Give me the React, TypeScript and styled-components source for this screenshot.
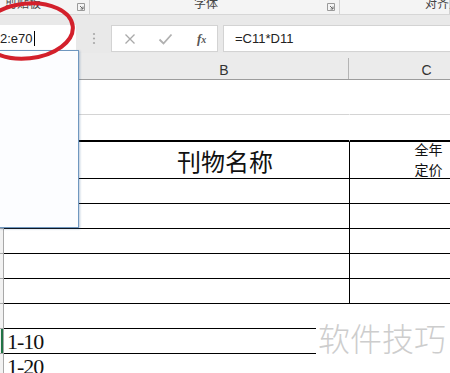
import React from "react";
import styled, { createGlobalStyle } from "styled-components";

const Global = createGlobalStyle`
  html, body {
    margin: 0;
    padding: 0;
    background: #ffffff;
  }
  body {
    font-family: "Liberation Sans", "Noto Sans CJK SC", sans-serif;
  }
`;

const rows = [
  { h: 35, line: "1px solid #d4d4d4", ruled: false },
  { h: 27, line: "2px solid #000", ruled: false },
  { h: 37, line: "1px solid #000", ruled: true, title: true },
  { h: 25, line: "1px solid #000", ruled: true },
  { h: 25, line: "1px solid #000", ruled: true },
  { h: 25, line: "1px solid #000", ruled: true },
  { h: 25, line: "1px solid #000", ruled: true },
  { h: 25, line: "1px solid #000", ruled: true },
  { h: 25, line: "1px solid #000", ruled: false },
  { h: 25, line: "1px solid #000", ruled: false, text: "1-10", active: true },
  { h: 25, line: "1px solid #000", ruled: false, text: "1-20" },
];

const Launcher = () => (
  <svg width="8" height="8" viewBox="0 0 8 8">
    <path d="M0.5 0.5h7v7h-7z" fill="none" stroke="#9a9a9a" />
    <path d="M3 3l3 3M6 3.5V6H3.5" fill="none" stroke="#6a6a6a" />
  </svg>
);

const App = () => {
  return (
    <Page>
      <Global />
      <Ribbon>
        <Group $w={90} $pad={5}>
          <GroupLabel>剪贴板</GroupLabel>
          <Launcher />
        </Group>
        <Group $w={250} $pad={104}>
          <GroupLabel>字体</GroupLabel>
          <Launcher />
        </Group>
        <Group $w={110} $pad={85}>
          <GroupLabel>对齐方式</GroupLabel>
        </Group>
      </Ribbon>

      <FormulaRow>
        <NameBox>
          2:e70
          <Caret />
        </NameBox>
        <Grip>
          <svg width="4" height="13" viewBox="0 0 4 13">
            <circle cx="2" cy="2" r="1.1" fill="#a8a8a8" />
            <circle cx="2" cy="6.5" r="1.1" fill="#a8a8a8" />
            <circle cx="2" cy="11" r="1.1" fill="#a8a8a8" />
          </svg>
        </Grip>
        <ButtonBox>
          <svg width="12" height="12" viewBox="0 0 12 12">
            <path d="M1.5 1.5l9 9M10.5 1.5l-9 9" stroke="#a9a9a9" strokeWidth="1.3" />
          </svg>
          <svg width="15" height="12" viewBox="0 0 15 12">
            <path d="M1.5 6.5l4 4L13.5 1.5" fill="none" stroke="#b0b0b0" strokeWidth="1.8" />
          </svg>
          <Fx>
            f<small>x</small>
          </Fx>
        </ButtonBox>
        <FormulaInput>=C11*D11</FormulaInput>
      </FormulaRow>

      <HeaderRow>
        <HeaderSpacer />
        <HeaderCell $w={249}>B</HeaderCell>
        <HeaderCell $w={156}>C</HeaderCell>
      </HeaderRow>

      <Sheet>
        {rows.map((r, i) => (
          <Row key={i} $h={r.h}>
            <RowHead $active={!!r.active} />
            <MainCell $line={r.line} $title={!!r.title} $left={!!r.text}>
              {r.title ? "刊物名称" : r.text}
            </MainCell>
            <SideCell $line={r.line} $ruled={r.ruled}>
              {r.title && (
                <PriceLabel>
                  <span>全年</span>
                  <span>定价</span>
                </PriceLabel>
              )}
            </SideCell>
          </Row>
        ))}
      </Sheet>

      <NameList />
      <Ring width="80" height="66" viewBox="0 0 80 66">
        <ellipse
          cx="27"
          cy="31"
          rx="46"
          ry="27.5"
          transform="rotate(-6 27 31)"
          fill="none"
          stroke="#d3202b"
          strokeWidth="4"
        />
      </Ring>
      <Watermark>软件技巧</Watermark>
    </Page>
  );
};

export default App;

const Page = styled.div`
  position: relative;
  width: 450px;
  height: 373px;
  overflow: hidden;
  background: #fff;
`;

const Ribbon = styled.div`
  display: flex;
  height: 14px;
  background: #f4f4f4;
  border-bottom: 1px solid #d6d6d6;
  overflow: hidden;
`;

const Group = styled.div<{ $w: number; $pad: number }>`
  display: flex;
  align-items: flex-start;
  flex-shrink: 0;
  width: ${(p) => p.$w}px;
  padding-left: ${(p) => p.$pad}px;
  padding-right: 4px;
  box-sizing: border-box;
  border-right: 1px solid #d2d2d2;
  height: 14px;

  svg {
    margin-left: auto;
    margin-top: 3px;
  }
`;

const GroupLabel = styled.span`
  font-family: "Noto Sans CJK SC", sans-serif;
  font-size: 12px;
  line-height: 12px;
  margin-top: -3px;
  color: #444;
  white-space: nowrap;
`;

const FormulaRow = styled.div`
  display: flex;
  align-items: stretch;
  height: 38px;
  padding: 10px 0 1px;
  box-sizing: border-box;
  background: #e9e9e9;
`;

const NameBox = styled.div`
  position: relative;
  width: 76px;
  background: #fff;
  font-size: 13px;
  color: #222;
  display: flex;
  align-items: center;
  box-sizing: border-box;
`;

const Caret = styled.span`
  display: inline-block;
  width: 1px;
  height: 15px;
  background: #000;
  margin-left: 1px;
`;

const Grip = styled.div`
  width: 35px;
  display: flex;
  align-items: center;
  justify-content: center;
`;

const ButtonBox = styled.div`
  width: 107px;
  background: #fff;
  border: 1px solid #d3d3d3;
  box-sizing: border-box;
  display: flex;
  align-items: center;
  padding-left: 12px;
  gap: 22px;
`;

const Fx = styled.span`
  font-family: "Liberation Serif", serif;
  font-style: italic;
  font-weight: bold;
  font-size: 13px;
  color: #555;
  margin-left: 2px;

  small {
    font-size: 10px;
  }
`;

const FormulaInput = styled.div`
  flex: 1;
  margin-left: 5px;
  background: #fff;
  border: 1px solid #d3d3d3;
  border-right: none;
  display: flex;
  align-items: center;
  padding-left: 11px;
  font-size: 13px;
  color: #222;
`;

const HeaderRow = styled.div`
  display: flex;
  height: 27px;
  background: #ebebeb;
  border-bottom: 1px solid #9c9c9c;
  box-sizing: border-box;
`;

const HeaderSpacer = styled.div`
  width: 100px;
  flex-shrink: 0;
`;

const HeaderCell = styled.div<{ $w: number }>`
  width: ${(p) => p.$w}px;
  flex-shrink: 0;
  display: flex;
  align-items: center;
  justify-content: center;
  padding-top: 2px;
  font-size: 14px;
  color: #333;
  border-right: 1px solid #b4b4b4;
  box-sizing: border-box;
  margin: 5px 0 0;
`;

const Sheet = styled.div`
  display: flex;
  flex-direction: column;
`;

const Row = styled.div<{ $h: number }>`
  display: flex;
  height: ${(p) => p.$h}px;
  flex-shrink: 0;
`;

const RowHead = styled.div<{ $active: boolean }>`
  width: 4px;
  flex-shrink: 0;
  background: #f2f2f2;
  border-right: 1px solid #a8a8a8;
  border-bottom: 1px solid #a8a8a8;
  box-sizing: border-box;
  box-shadow: ${(p) => (p.$active ? "inset -2px 0 0 #217346" : "none")};
`;

const MainCell = styled.div<{ $line: string; $title: boolean; $left: boolean }>`
  width: 345px;
  flex-shrink: 0;
  box-sizing: border-box;
  border-bottom: ${(p) => p.$line};
  display: flex;
  align-items: center;
  justify-content: ${(p) => (p.$left ? "flex-start" : "center")};
  padding-left: ${(p) => (p.$left ? 3 : 97)}px;
  font-family: ${(p) =>
    p.$left ? '"Liberation Serif", serif' : '"Noto Sans CJK SC", sans-serif'};
  font-size: ${(p) => (p.$title ? 24 : 22)}px;
  letter-spacing: ${(p) => (p.$left ? -1 : 0)}px;
  color: #111;
  padding-top: ${(p) => (p.$left ? 2 : 0)}px;
`;

const SideCell = styled.div<{ $line: string; $ruled: boolean }>`
  width: 156px;
  flex-shrink: 0;
  box-sizing: border-box;
  border-bottom: ${(p) => p.$line};
  border-left: 1px solid ${(p) => (p.$ruled ? "#000" : "transparent")};
  display: flex;
  align-items: center;
  justify-content: center;
`;

const PriceLabel = styled.div`
  display: flex;
  flex-direction: column;
  align-items: center;
  font-family: "Noto Sans CJK SC", sans-serif;
  font-size: 14px;
  line-height: 20px;
  color: #111;
  padding-left: 2px;
  margin-top: -2px;

  span {
    display: block;
  }
`;

const NameList = styled.div`
  position: absolute;
  left: -1px;
  top: 50px;
  width: 80px;
  height: 178px;
  background: #fcfdff;
  border: 1px solid #6f97bf;
  box-sizing: border-box;
  box-shadow: 1px 1px 2px rgba(60, 100, 150, 0.35);
`;

const Ring = styled.svg`
  position: absolute;
  left: 0;
  top: 0;
`;

const Watermark = styled.div`
  position: absolute;
  left: 316px;
  top: 311px;
  width: 134px;
  height: 52px;
  background: #fff;
  display: flex;
  align-items: center;
  padding-left: 2px;
  box-sizing: border-box;
  font-family: "Noto Sans CJK SC", sans-serif;
  font-weight: 300;
  font-size: 32px;
  color: #cdcdcd;
`;
